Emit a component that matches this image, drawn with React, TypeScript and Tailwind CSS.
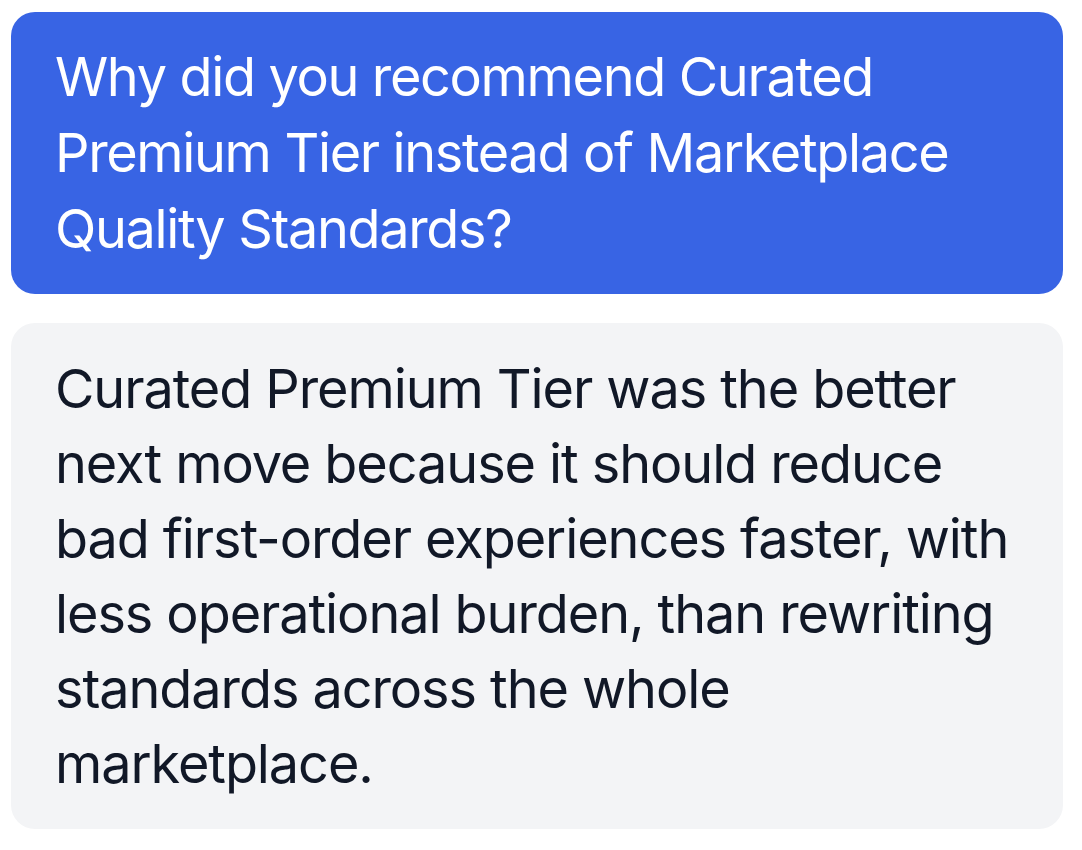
export default function App() {
  return (
    <div className="min-h-screen bg-white pt-[12px] pl-[11px] pr-[19px] font-['Inter',sans-serif]">
      <div className="flex flex-col gap-[29px]">
        <div className="rounded-[24px] bg-[#3864e4] px-[44px] py-[27px] text-[54px] leading-[76px] tracking-[-0.025em] text-white">
          Why did you recommend Curated Premium Tier instead of Marketplace Quality Standards?
        </div>
        <div className="rounded-[24px] bg-[#f3f4f6] px-[44px] py-[28px] text-[54px] leading-[75px] tracking-[-0.02em] text-[#111827]">
          Curated Premium Tier was the better next move because it should reduce bad first-order experiences faster, with less
          operational burden, than rewriting standards across the whole marketplace.
        </div>
      </div>
    </div>
  );
}
